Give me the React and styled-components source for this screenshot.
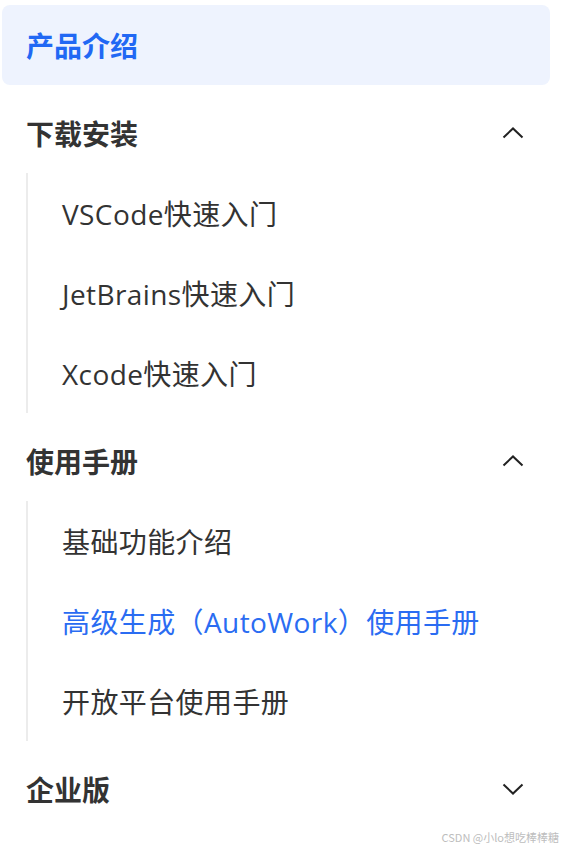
import React from 'react';
import styled, { createGlobalStyle } from 'styled-components';

const GlobalStyle = createGlobalStyle`
  body {
    margin: 0;
    background: #ffffff;
    font-family: "Open Sans", "Noto Sans CJK SC", sans-serif;
  }
`;

const Page = styled.div`
  position: relative;
  width: 561px;
  height: 849px;
  overflow: hidden;
`;

const Nav = styled.nav`
  width: 548px;
  margin-left: 2px;
  padding-top: 5px;
  display: flex;
  flex-direction: column;
`;

const ActiveCard = styled.div`
  height: 80px;
  margin-bottom: 8px;
  padding-left: 24px;
  display: flex;
  align-items: center;
  background: #eef3fe;
  border-radius: 8px;
  color: #2168f4;
  font-family: "Noto Sans CJK SC", sans-serif;
  font-size: 28px;
  font-weight: 700;
`;

const Group = styled.section`
  margin-bottom: 8px;
`;

const GroupHeader = styled.div`
  height: 80px;
  padding: 0 26px 0 24px;
  display: flex;
  align-items: center;
  justify-content: space-between;
  color: #333333;
  font-family: "Noto Sans CJK SC", sans-serif;
  font-size: 28px;
  font-weight: 700;
`;

const SubList = styled.ul`
  list-style: none;
  margin: 0 0 0 24px;
  padding: 0;
  border-left: 2px solid #ececec;
`;

const SubItem = styled.li`
  height: 80px;
  padding-left: 34px;
  display: flex;
  align-items: center;
  color: ${p => (p.$active ? '#2a6cf2' : '#333333')};
  font-size: 28px;
  letter-spacing: 0.4px;
  white-space: nowrap;
`;

const Watermark = styled.div`
  position: absolute;
  right: 2px;
  bottom: 4px;
  color: #bdbdbd;
  font-family: "Noto Sans CJK SC", sans-serif;
  font-size: 11px;
`;

const Chevron = ({ up }) => (
  <svg width="22" height="12" viewBox="0 0 22 12">
    <polyline
      points={up ? '1.5,10.5 11,1.5 20.5,10.5' : '1.5,1.5 11,10.5 20.5,1.5'}
      fill="none"
      stroke="#222"
      strokeWidth="2"
    />
  </svg>
);

const groups = [
  { title: '下载安装', open: true, items: ['VSCode快速入门', 'JetBrains快速入门', 'Xcode快速入门'] },
  { title: '使用手册', open: true, items: ['基础功能介绍', '高级生成（AutoWork）使用手册', '开放平台使用手册'], active: 1 },
  { title: '企业版', open: false, items: [] },
];

const App = () => (
  <Page>
    <GlobalStyle />
    <Nav>
      <ActiveCard>产品介绍</ActiveCard>
      {groups.map(g => (
        <Group key={g.title}>
          <GroupHeader>
            {g.title}
            <Chevron up={g.open} />
          </GroupHeader>
          {g.open && (
            <SubList>
              {g.items.map((it, i) => (
                <SubItem key={it} $active={g.active === i}>{it}</SubItem>
              ))}
            </SubList>
          )}
        </Group>
      ))}
    </Nav>
    <Watermark>CSDN @小lo想吃棒棒糖</Watermark>
  </Page>
);

export default App;
